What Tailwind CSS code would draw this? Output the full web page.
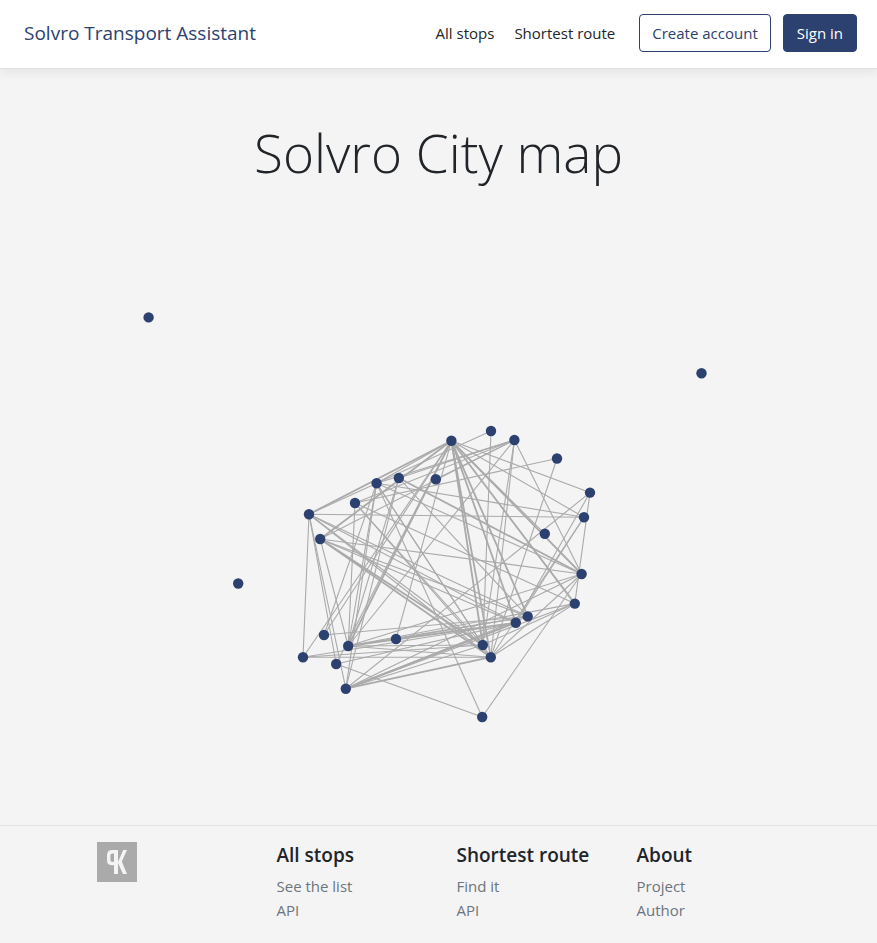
<!DOCTYPE html>
<html lang="en">
<head>
<meta charset="utf-8">
<meta name="viewport" content="width=device-width, initial-scale=1">
<title>Solvro Transport Assistant</title>
<script src="https://cdn.jsdelivr.net/npm/@tailwindcss/browser@4"></script>
</head>
<body class="flex min-h-screen flex-col bg-[#f4f4f4] font-['Open_Sans','Noto_Sans',sans-serif] text-[15px] leading-6 text-[#212529]">
<header class="border-b border-[#dee2e6] bg-white pt-3.5 pr-5 pb-4 pl-6 shadow-[0_4px_8px_rgba(0,0,0,0.06)]">
  <div class="flex flex-wrap items-center justify-between">
    <a href="#" class="text-[19px] text-[#2c4170]">Solvro Transport Assistant</a>
    <div class="flex flex-wrap items-center gap-6">
      <nav class="flex gap-5">
        <a href="#">All stops</a>
        <a href="#">Shortest route</a>
      </nav>
      <div class="flex gap-3">
        <button type="button" class="rounded border border-[#2c4170] px-3 py-1.5 text-[#2c4170]">Create account</button>
        <button type="button" class="rounded border border-[#2c4170] bg-[#2c4170] px-[13px] py-1.5 text-white">Sign in</button>
      </div>
    </div>
  </div>
</header>
<main class="flex flex-1 flex-col items-center pt-[50px]">
  <h1 class="text-center text-[53px] leading-[67px] font-light">Solvro City map</h1>
  <svg id="map" class="mt-[19px] w-full max-w-[877px]" viewBox="0 205 877 600" role="img" aria-label="Map of stops and their connections">
    <g id="links" stroke="#aaa"></g>
    <g id="stops" fill="#2c4170"></g>
  </svg>
</main>
<footer class="border-t border-[#dee2e6] pt-4 pb-[21px]">
  <div class="mx-auto grid max-w-[756px] grid-cols-4 pl-9">
    <svg class="size-10" viewBox="0 0 40 40" aria-label="PK" role="img">
      <path fill="#aaa" d="M0 0h40v40H0z"/>
      <path fill="none" stroke="#f4f4f4" stroke-width="3.4" d="M18.7 32V9.7h-3.2Q11.7 9.7 11.7 13.2v5.3q0 3 3.8 3h3.5"/>
      <path fill="#f4f4f4" d="M17 8h4v24h-4zM21 20l5.2-12H30l-5.2 11.5L30 32h-4l-5-11z"/>
    </svg>
    <section>
      <h2 class="mb-1.5 text-[19px] leading-[26px] font-semibold">All stops</h2>
      <ul class="text-[#6c757d]"><li><a href="#">See the list</a></li><li><a href="#">API</a></li></ul>
    </section>
    <section>
      <h2 class="mb-1.5 text-[19px] leading-[26px] font-semibold">Shortest route</h2>
      <ul class="text-[#6c757d]"><li><a href="#">Find it</a></li><li><a href="#">API</a></li></ul>
    </section>
    <section>
      <h2 class="mb-1.5 text-[19px] leading-[26px] font-semibold">About</h2>
      <ul class="text-[#6c757d]"><li><a href="#">Project</a></li><li><a href="#">Author</a></li></ul>
    </section>
  </div>
</footer>
<script>
const stops = {
  A:[451.4,440.8],B:[491,431],C:[514.4,440],D:[557,458.5],E:[590,492.6],F:[584,517.3],G:[544.8,533.8],
  H:[581.6,574],I:[574.8,603.6],J:[527.7,616.4],K:[515.8,622.8],L:[482.8,645],M:[490.8,657.2],N:[482.2,717],
  O:[396,639],P:[348.2,646],Q:[345.8,688.7],R:[336.2,664],S:[324,635],T:[303,657.2],U:[320.2,539],
  V:[309,514.2],W:[355,503],X:[376.6,483.2],Y:[398.8,478],Z:[435.8,479.3],
  a:[148.6,317.4],b:[701.5,373.2],c:[238.2,583.5]
};
const links = 'AV AU AX AP AR AS AT AO AE AF AH AI AG AK AJ AL AM BV BL CY CX CZ CW CU CP CM CL CH DW DM EI EQ EK FM FK FV FX HY HX HU HN HM HP HQ IM IQ IW IP IL NX NR UL UM UK UJ UP VT VR VQ VM VL VK VJ WP WM WL XP XQ XS XM XL YQ YP YJ SJ TM TK TL PK PJ PM PL OJ OK RK QM QK QJ QL'.split(' ');
const heavy = new Set(['AV','AU','AP','AH','AI','AK','AJ','AL','AM','HY','UM','UL','PK','QM','QK']);
const svg = (tag, attrs, parent) => {
  const el = document.createElementNS('http://www.w3.org/2000/svg', tag);
  for (const key in attrs) el.setAttribute(key, attrs[key]);
  parent.append(el);
};
for (const id of links) {
  const [x1, y1] = stops[id[0]], [x2, y2] = stops[id[1]];
  svg('line', {x1, y1, x2, y2, 'stroke-width': heavy.has(id) ? 1.8 : 1.1}, document.getElementById('links'));
}
for (const [cx, cy] of Object.values(stops)) svg('circle', {cx, cy, r: 5.2}, document.getElementById('stops'));
</script>
</body>
</html>
